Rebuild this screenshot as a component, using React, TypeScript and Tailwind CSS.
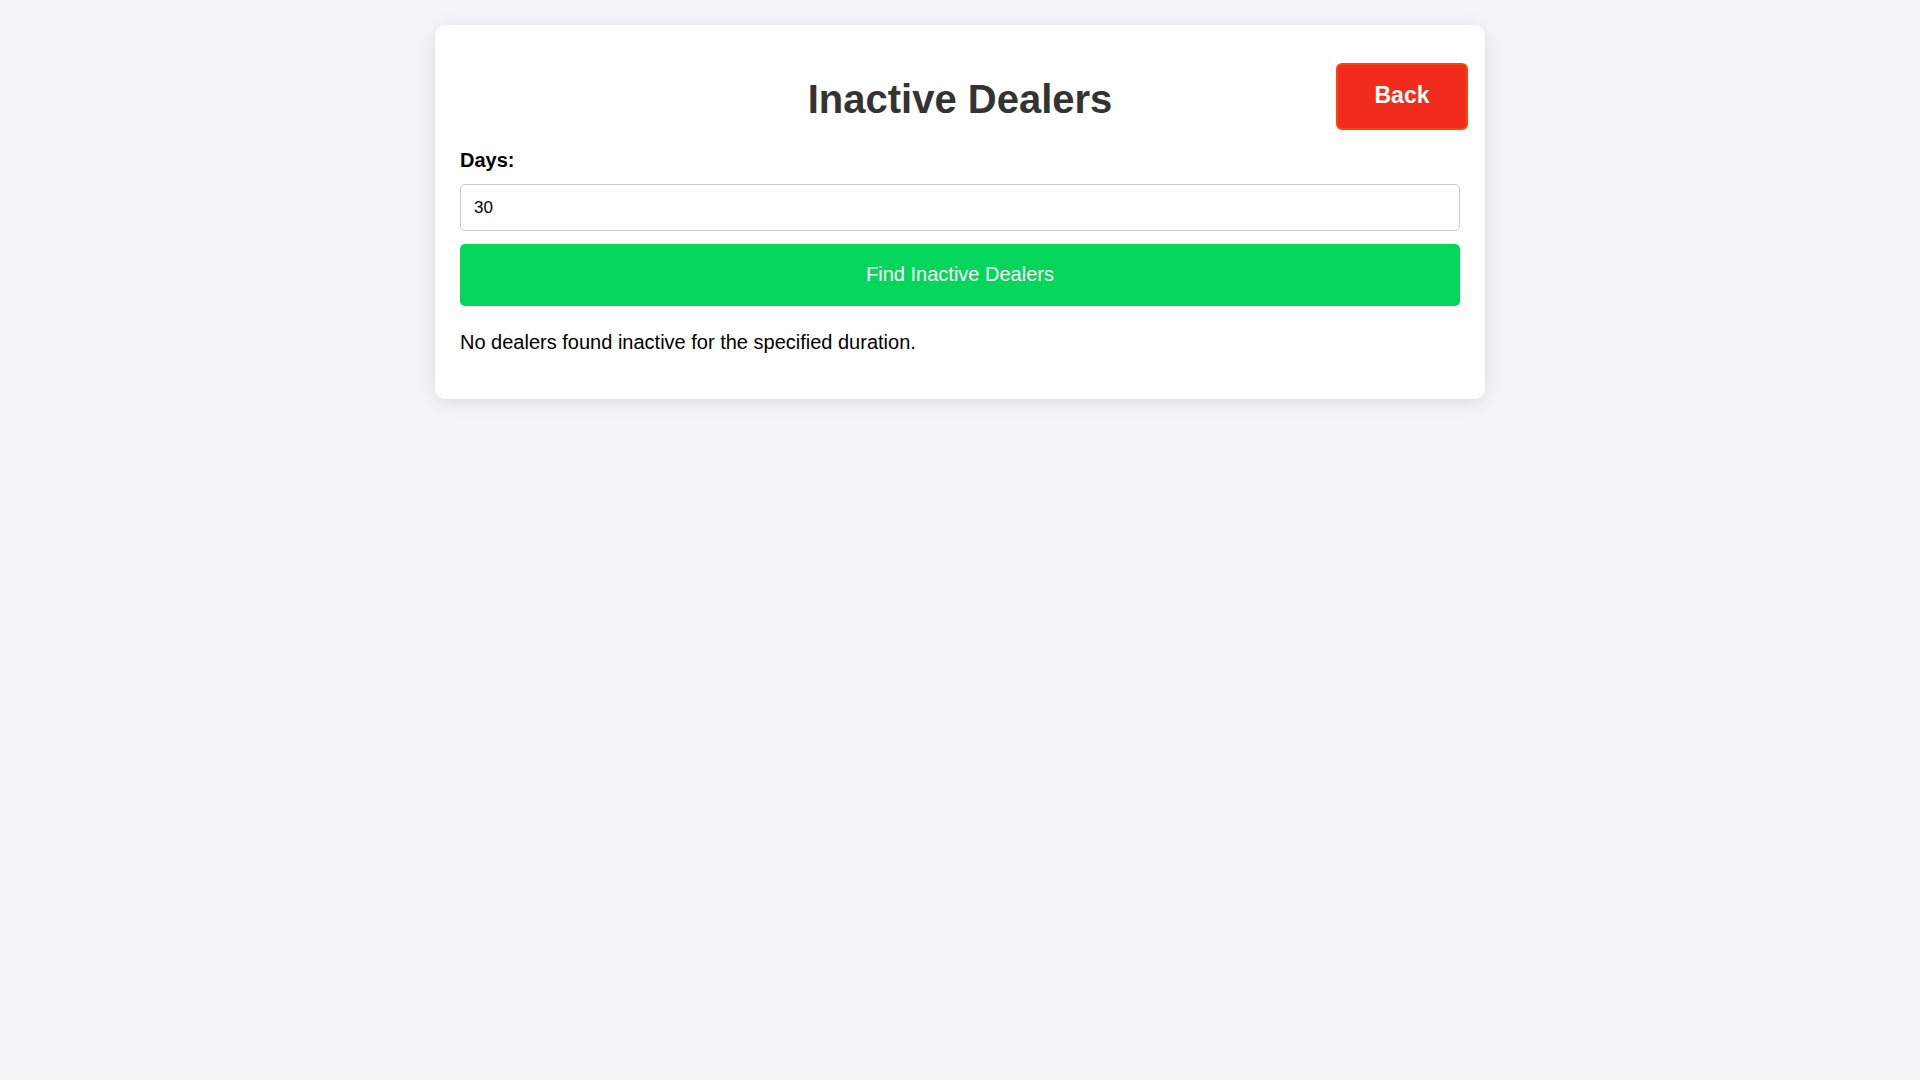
import React, { useState } from "react";

export default function App() {
  const [days, setDays] = useState("30");
  return (
    <div className="min-h-screen bg-[#f4f4f9] p-[25px] font-['Liberation_Sans',Arial,sans-serif] text-black">
      <main className="relative mx-auto max-w-[1050px] rounded-[10px] bg-white px-[25px] pt-[51px] pb-[45px] shadow-[0_3px_18px_rgba(0,0,0,0.1)]">
        <h1 className="text-center text-[40px] leading-[46px] font-bold text-[#333333]">Inactive Dealers</h1>
        <button type="button" className="absolute top-[38px] right-[17px] h-[67px] w-[132px] rounded-[6px] border-2 border-[#ff4500] bg-[#f22c1d] pb-0.5 text-[23px] font-bold text-white">
          Back
        </button>
        <form onSubmit={(e) => e.preventDefault()} className="mt-[27px] flex flex-col">
          <label htmlFor="days" className="text-[20px] leading-[23px] font-bold">Days:</label>
          <input
            id="days"
            type="number"
            value={days}
            onChange={(e) => setDays(e.target.value)}
            className="mt-3 h-[47px] w-full rounded-[5px] border border-[#cccccc] px-[13px] text-[17px]"
          />
          <button type="submit" className="mt-[13px] h-[62px] rounded-[5px] bg-[#04d55b] pb-[3px] text-[20px] text-white">
            Find Inactive Dealers
          </button>
        </form>
        <p className="mt-[25px] text-[20px] leading-[23px]">No dealers found inactive for the specified duration.</p>
      </main>
    </div>
  );
}
